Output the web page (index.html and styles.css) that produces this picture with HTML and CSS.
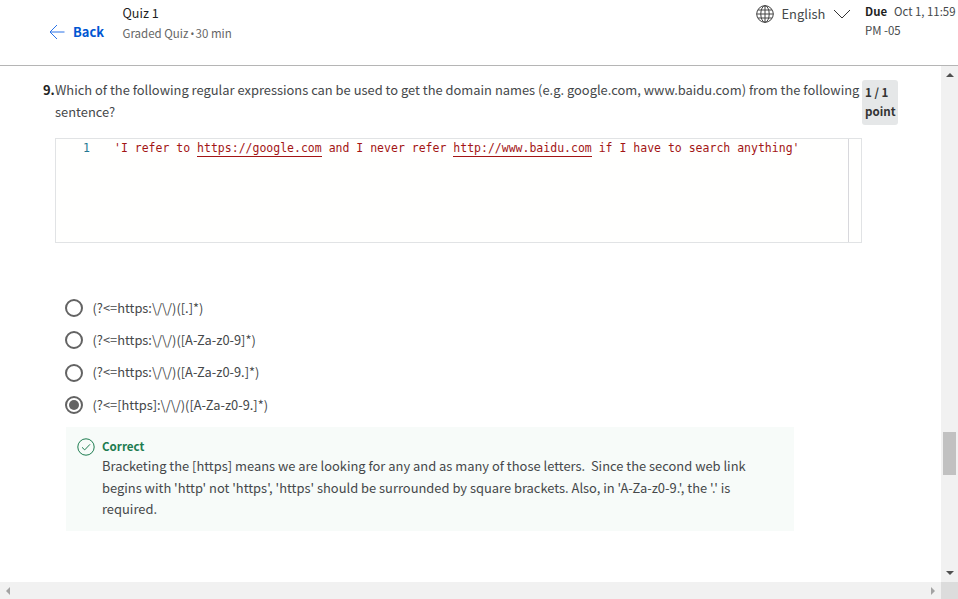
FILE: index.html
```html
<!DOCTYPE html>
<html lang="en">
<head>
<meta charset="utf-8">
<title>Quiz 1</title>
<link rel="stylesheet" href="styles.css">
</head>
<body>
<header class="topbar">
  <a class="back"><svg width="16" height="16" viewBox="0 0 16 16"><path d="M15.5 8H1M8 1L1 8l7 7"/></svg><span class="back-label">Back</span></a>
  <div class="title"><div class="name">Quiz 1</div><div class="meta">Graded Quiz<span class="bullet"> • </span>30 min</div></div>
  <div class="language">
    <svg width="18" height="18" viewBox="0 0 18 18"><circle cx="9" cy="9" r="8.3"/><ellipse cx="9" cy="9" rx="4.2" ry="8.3"/><path d="M9 .7v16.6M.7 9h16.6M2 5h14M2 13h14"/></svg>
    <span class="language-label">English</span>
    <svg class="chevron" width="18" height="12" viewBox="0 0 18 12"><path d="M1 2l8 8 8-8"/></svg>
  </div>
  <div class="due"><b>Due</b><span class="date">Oct 1, 11:59</span><br>PM -05</div>
</header>
<div class="viewport">
  <main class="content">
    <section class="question">
      <b class="number">9.</b>
      <div class="prompt">
        <p class="prompt-text">Which of the following regular expressions can be used to get the domain names (e.g. google.com, www.baidu.com) from the following<br>sentence?</p>
        <div class="editor">
          <div class="line-number">1</div>
          <div class="code">'I refer to <span class="link">https://google.com</span> and I never refer <span class="link">http://www.baidu.com</span> if I have to search anything'</div>
          <div class="ruler"></div>
        </div>
      </div>
      <div class="points">1 / 1<br>point</div>
    </section>
    <section class="options">
      <label class="option"><i class="radio"></i><span class="answer">(?&lt;=https:\/\/)([.]*)</span></label>
      <label class="option"><i class="radio"></i><span class="answer">(?&lt;=https:\/\/)([A-Za-z0-9]*)</span></label>
      <label class="option"><i class="radio"></i><span class="answer">(?&lt;=https:\/\/)([A-Za-z0-9.]*)</span></label>
      <label class="option"><i class="radio checked"></i><span class="answer">(?&lt;=[https]:\/\/)([A-Za-z0-9.]*)</span></label>
    </section>
    <section class="feedback">
      <svg width="18" height="18" viewBox="0 0 18 18"><circle cx="9" cy="9" r="8.2"/><path d="M5 9.3l2.7 2.6L13 6.3"/></svg>
      <div class="explanation"><b class="verdict">Correct</b><p class="reason">Bracketing the [https] means we are looking for any and as many of those letters.&nbsp; Since the second web link<br>begins with 'http' not 'https', 'https' should be surrounded by square brackets. Also, in 'A-Za-z0-9.', the '.' is<br>required.</p></div>
    </section>
  </main>
  <div class="vscroll"><i class="arrow up"></i><i class="thumb"></i><i class="arrow down"></i></div>
</div>
<footer class="hscroll"><i class="arrow left"></i><i class="arrow right"></i><i class="corner"></i></footer>
</body>
</html>
```
FILE: styles.css
```css
* { box-sizing: border-box; }
body { margin: 0; height: 599px; display: flex; flex-direction: column; overflow: hidden; background: #fff; color: #45484a; font-family: "Noto Sans CJK SC", "Noto Sans", sans-serif; font-size: 12.92px; white-space: nowrap; }
p { margin: 0; }
svg { fill: none; stroke: #333; stroke-width: 1; flex: none; display: block; }

.topbar { height: 66px; flex: none; border-bottom: 1px solid #b5b5b5; display: flex; align-items: flex-start; }
.back { width: 122.5px; padding: 22px 0 0 49px; display: flex; align-items: center; gap: 8px; color: #0056d2; font-weight: bold; line-height: 20px; }
.back svg { stroke: #2a73e8; }
.title { width: 633.5px; padding-top: 3px; line-height: 20px; }
.name { color: #1f1f1f; font-size: 12.6px; }
.meta { color: #666; font-size: 11.5px; }
.bullet { font-family: "Noto Sans", sans-serif; font-size: 10px; letter-spacing: -0.6px; }
.language { width: 109px; padding-top: 4px; display: flex; align-items: center; gap: 7.5px; line-height: 20px; }
.language svg:first-child { stroke: #444; }
.due { padding-top: 2px; font-size: 11.4px; line-height: 18.5px; }
.due b { color: #1f1f1f; margin-right: 7px; }

.viewport { flex: 1; min-height: 0; display: flex; }
.content { width: 941px; padding: 14px 43px 0; }
.question { display: flex; align-items: flex-start; }
.number { width: 12px; line-height: 20px; color: #222; }
.prompt { width: 807px; }
.prompt-text { line-height: 22px; height: 58px; margin-top: -1px; margin-bottom: 1px; }
.editor { height: 105px; border: 1px solid #e1e3e5; display: flex; background: #fffffe; font-family: "DejaVu Sans Mono", "Liberation Mono", monospace; font-size: 11.5px; line-height: 19px; }
.line-number { width: 58px; padding-left: 27px; color: #237893; }
.code { flex: 1; color: #a31515; white-space: pre; }
.link { display: inline-block; height: 18px; border-bottom: 1px solid #a31515; }
.ruler { width: 13px; border-left: 1px solid #d8d8dc; }
.points { width: 36px; height: 45px; padding: 3px 3px; background: #e5e7e8; border-radius: 3px; font-size: 11.6px; font-weight: bold; line-height: 19px; color: #333; }

.options { padding: 49px 0 0 22px; height: 184px; }
.option { display: flex; align-items: center; gap: 9.5px; height: 32.3px; }
.answer { padding-bottom: 2px; font-size: 12.85px; }
.radio { width: 18px; height: 18px; border: 2px solid #636363; border-radius: 50%; display: grid; place-items: center; }
.checked::after { content: ""; width: 10px; height: 10px; border-radius: 50%; background: #636363; }

.feedback { width: 728px; height: 104px; margin-left: 23px; padding: 11px; display: flex; gap: 7px; background: #f7fbf9; }
.feedback svg { stroke: #1d7c50; }
.explanation { line-height: 21.5px; margin-top: -1px; }
.verdict { display: block; height: 18px; line-height: 18px; color: #1d7c50; font-size: 11.6px; }

.vscroll { width: 17px; background: #f1f1f1; display: flex; flex-direction: column; align-items: center; padding-top: 7px; }
.arrow { border: 4px solid transparent; width: 0; height: 0; }
.up { border-top: 0; border-bottom-color: #505050; }
.thumb { width: 13px; height: 43px; margin-top: 355px; background: #c1c1c1; }
.down { border-bottom: 0; border-top-color: #505050; margin-top: 96px; }
.hscroll { height: 17px; flex: none; background: #f1f1f1; display: flex; align-items: center; }
.left { border-left: 0; border-right-color: #a3a3a3; margin-left: 6px; }
.right { border-right: 0; border-left-color: #a3a3a3; margin-left: 921px; }
.corner { width: 17px; height: 17px; margin-left: auto; background: #dcdcdc; }
```
